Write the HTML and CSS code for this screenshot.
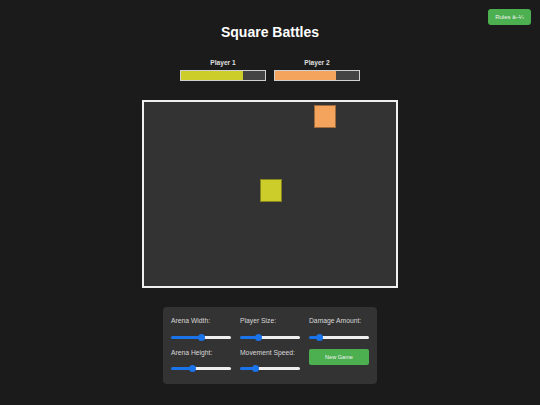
FILE: index.html
```html
<!DOCTYPE html>
<html>
<head>
<meta charset="utf-8">
<title>Square Battles</title>
<link rel="stylesheet" href="styles.css">
</head>
<body>
<button class="rules-btn">Rules â–¼</button>
<main class="page">
  <h1 class="title">Square Battles</h1>
  <div class="health-row">
    <div class="health">
      <div class="health-label">Player 1</div>
      <div class="health-bar"><div class="health-fill p1" style="width:74%"></div></div>
    </div>
    <div class="health">
      <div class="health-label">Player 2</div>
      <div class="health-bar"><div class="health-fill p2" style="width:73%"></div></div>
    </div>
  </div>
  <div class="arena">
    <div class="square sq-p2" style="left:170px; top:3px"></div>
    <div class="square sq-p1" style="left:116px; top:77px"></div>
  </div>
  <div class="controls">
    <label class="control">
      <span class="control-label">Arena Width:</span>
      <input type="range" class="slider" min="0" max="100" value="50" style="--fill:50%">
    </label>
    <label class="control">
      <span class="control-label">Player Size:</span>
      <input type="range" class="slider" min="0" max="100" value="29" style="--fill:31.5%">
    </label>
    <label class="control">
      <span class="control-label">Damage Amount:</span>
      <input type="range" class="slider" min="0" max="100" value="13" style="--fill:17.3%">
    </label>
    <label class="control">
      <span class="control-label">Arena Height:</span>
      <input type="range" class="slider" min="0" max="100" value="34" style="--fill:35.9%">
    </label>
    <label class="control">
      <span class="control-label">Movement Speed:</span>
      <input type="range" class="slider" min="0" max="100" value="22" style="--fill:25.3%">
    </label>
    <div class="control">
      <button class="new-game">New Game</button>
    </div>
  </div>
</main>
</body>
</html>
```

FILE: styles.css
```css
html, body {
  margin: 0;
  padding: 0;
  background: #1b1b1b;
  color: #fff;
  font-family: "Liberation Sans", Arial, sans-serif;
  height: 100%;
}

.rules-btn {
  position: absolute;
  top: 9px;
  right: 9px;
  width: 43px;
  height: 16px;
  padding: 0;
  border: none;
  border-radius: 3px;
  background: #4caf50;
  color: #f2f2f2;
  font-family: "Liberation Sans", Arial, sans-serif;
  font-size: 6px;
  line-height: 16px;
}

.page {
  display: flex;
  flex-direction: column;
  align-items: center;
  padding-top: 24px;
}

.title {
  margin: 0;
  font-size: 14px;
  line-height: 16px;
  font-weight: bold;
  color: #fff;
}

.health-row {
  display: flex;
  gap: 8px;
  margin-top: 19px;
}

.health {
  display: flex;
  flex-direction: column;
  align-items: center;
  width: 86px;
}

.health-label {
  font-size: 6.6px;
  font-weight: bold;
  line-height: 8px;
  color: #e0e0e0;
}

.health-bar {
  margin-top: 3px;
  width: 84px;
  height: 9px;
  border: 1px solid #d0d0d0;
  background: #444;
}

.health-fill {
  height: 100%;
}

.health-fill.p1 { background: #cccc2a; }
.health-fill.p2 { background: #f4a45c; }

.arena {
  position: relative;
  margin-top: 19px;
  width: 252px;
  height: 184px;
  border: 2px solid #f0f0f0;
  background: #333;
}

.square {
  position: absolute;
  width: 20px;
  height: 21px;
  border: 1px solid rgba(0, 0, 0, 0.35);
}

.sq-p1 { background: #cccc2a; }
.sq-p2 { background: #f4a45c; }

.controls {
  margin-top: 19px;
  width: 198px;
  padding: 8px 8px 11px;
  background: #333;
  border-radius: 4px;
  display: grid;
  grid-template-columns: repeat(3, 60px);
  column-gap: 9px;
  row-gap: 5.5px;
}

.control {
  display: flex;
  flex-direction: column;
}

.control-label {
  font-size: 6.75px;
  line-height: 12px;
  color: #d8d8d8;
}

.slider {
  -webkit-appearance: none;
  appearance: none;
  margin: 6px 0 0;
  padding: 0;
  width: 60px;
  height: 8px;
  background: transparent;
}

.slider::-webkit-slider-runnable-track {
  height: 3px;
  border-radius: 2px;
  background: linear-gradient(to right, #1a73e8 0, #1a73e8 var(--fill), #efefef var(--fill), #efefef 100%);
}

.slider::-webkit-slider-thumb {
  -webkit-appearance: none;
  appearance: none;
  width: 7px;
  height: 7px;
  margin-top: -2px;
  border-radius: 50%;
  background: #1a73e8;
  border: none;
}

.new-game {
  margin-top: 2px;
  width: 60px;
  height: 16px;
  padding: 0;
  border: none;
  border-radius: 2px;
  background: #4caf50;
  color: #f2f2f2;
  font-family: "Liberation Sans", Arial, sans-serif;
  font-size: 5.6px;
  line-height: 16px;
}
```
